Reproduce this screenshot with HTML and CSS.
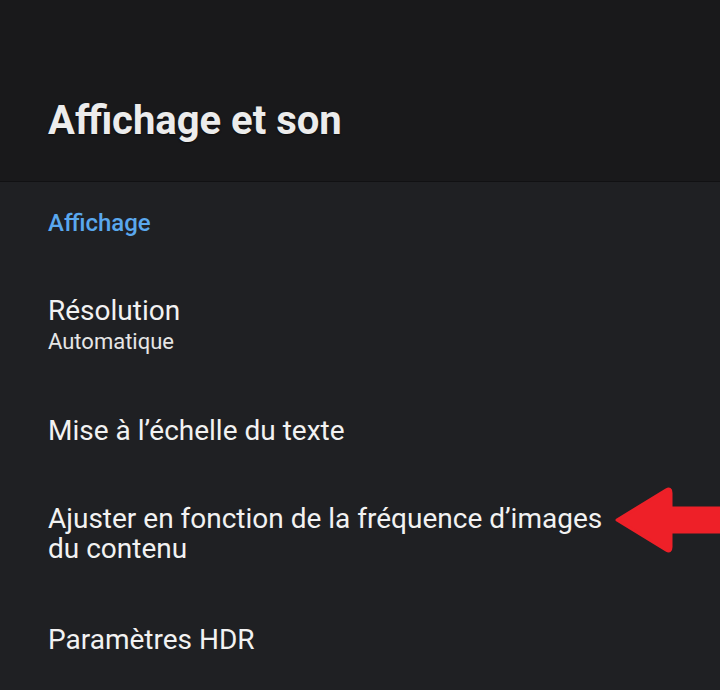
FILE: index.html
```html
<!DOCTYPE html>
<html lang="fr">
<head>
  <meta charset="UTF-8">
  <meta name="viewport" content="width=device-width, initial-scale=1.0">
  <title>Affichage et son</title>
  <link rel="stylesheet" href="styles.css">
</head>
<body>

  <header class="top-bar">
    <h1 class="page-title">Affichage et son</h1>
  </header>

  <main class="settings">
    <h2 class="section-title">Affichage</h2>

    <div class="setting">
      <div class="setting-name">Résolution</div>
      <div class="setting-value">Automatique</div>
    </div>

    <div class="setting">
      <div class="setting-name">Mise à l’échelle du texte</div>
    </div>

    <div class="setting setting-marked">
      <div class="setting-name">Ajuster en fonction de la fréquence d’images<br>du contenu</div>
      <svg class="pointer" width="106" height="66" viewBox="0 0 106 66">
        <path d="M3 33 L52 3 Q57 0 57 6 L57 21 L106 21 L106 45 L57 45 L57 60 Q57 66 52 63 Z" fill="#ee2028" stroke="#ee2028" stroke-width="3" stroke-linejoin="round"/>
      </svg>
    </div>

    <div class="setting setting-last">
      <div class="setting-name">Paramètres HDR</div>
    </div>
  </main>

</body>
</html>
```

FILE: styles.css
```css
body, html {
  margin: 0;
  padding: 0;
  font-family: 'Roboto', 'Noto Sans', sans-serif;
  background-color: #1f2023;
  color: #f2f2f2;
}

body {
  width: 720px;
  height: 690px;
  overflow: hidden;
}

.top-bar {
  background-color: #19191b;
  height: 182px;
  border-bottom: 1px solid #111113;
  box-sizing: border-box;
  padding: 97px 48px 0;
}

.page-title {
  margin: 0;
  font-size: 40px;
  font-weight: 700;
  line-height: 48px;
  color: #ececec;
  text-shadow: 0 1px 2px rgba(0, 0, 0, 0.6);
}

.settings {
  padding: 0 48px;
}

.section-title {
  margin: 0;
  padding-top: 26px;
  font-size: 24px;
  font-weight: 500;
  line-height: 30px;
  color: #5aa8ee;
}

.setting {
  position: relative;
  padding-top: 58px;
}

.setting-last {
  padding-top: 61px;
}

.setting-name {
  font-size: 28px;
  line-height: 30px;
  color: #f2f2f2;
}

.setting-value {
  font-size: 22px;
  line-height: 32px;
  color: #e6e6e6;
}

.pointer {
  position: absolute;
  right: -48px;
  top: 41px;
}
```
